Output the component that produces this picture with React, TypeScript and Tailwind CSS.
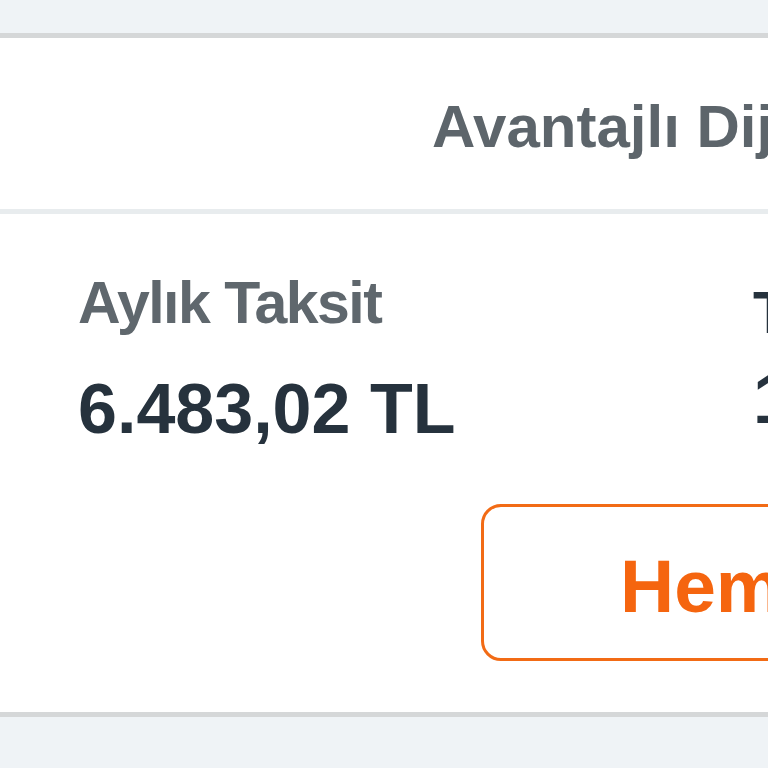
import React from "react";

export default function App() {
  return (
    <div
      className="w-[768px] h-[768px] overflow-hidden bg-[#eff3f6] pt-[33px]"
      style={{ fontFamily: '"Liberation Sans", Arial, sans-serif' }}
    >
      <div className="w-[1500px] bg-white border-y-[5px] border-[#d5d7d8]">
        <div className="h-[171px] pl-[432px] pt-[53px]">
          <h2 className="text-[60px] leading-[72px] font-bold text-[#5d656b] whitespace-nowrap">
            Avantajlı Dijital Kredi
          </h2>
        </div>
        <div className="h-[5px] bg-[#e8ecee]" />
        <div className="h-[498px] flex flex-col">
          <div className="flex pt-[53px]">
            <div className="w-[753px] pl-[78px] flex flex-col">
              <span className="text-[59px] leading-[72px] font-bold tracking-[-1.5px] text-[#5f676d] whitespace-nowrap">
                Aylık Taksit
              </span>
              <span className="mt-[28px] text-[70px] leading-[84px] font-bold text-[#26323d] whitespace-nowrap">
                6.483,02 TL
              </span>
            </div>
            <div className="flex flex-col pt-[10px]">
              <span className="text-[59px] leading-[72px] font-bold tracking-[-1.5px] text-[#26323d] whitespace-nowrap">
                Toplam Geri Ödeme
              </span>
              <span className="mt-[8px] text-[70px] leading-[84px] font-bold text-[#26323d] whitespace-nowrap">
                155.592,48 TL
              </span>
            </div>
          </div>
          <div className="ml-[481px] mt-[53px]">
            <button className="w-[802px] h-[157px] border-[3px] border-[#f26b15] rounded-[20px] bg-white flex items-center pl-[136px] pt-[7px]">
              <span className="text-[75px] leading-none font-bold text-[#f5650f] whitespace-nowrap">
                Hemen Başvur
              </span>
            </button>
          </div>
        </div>
      </div>
    </div>
  );
}
